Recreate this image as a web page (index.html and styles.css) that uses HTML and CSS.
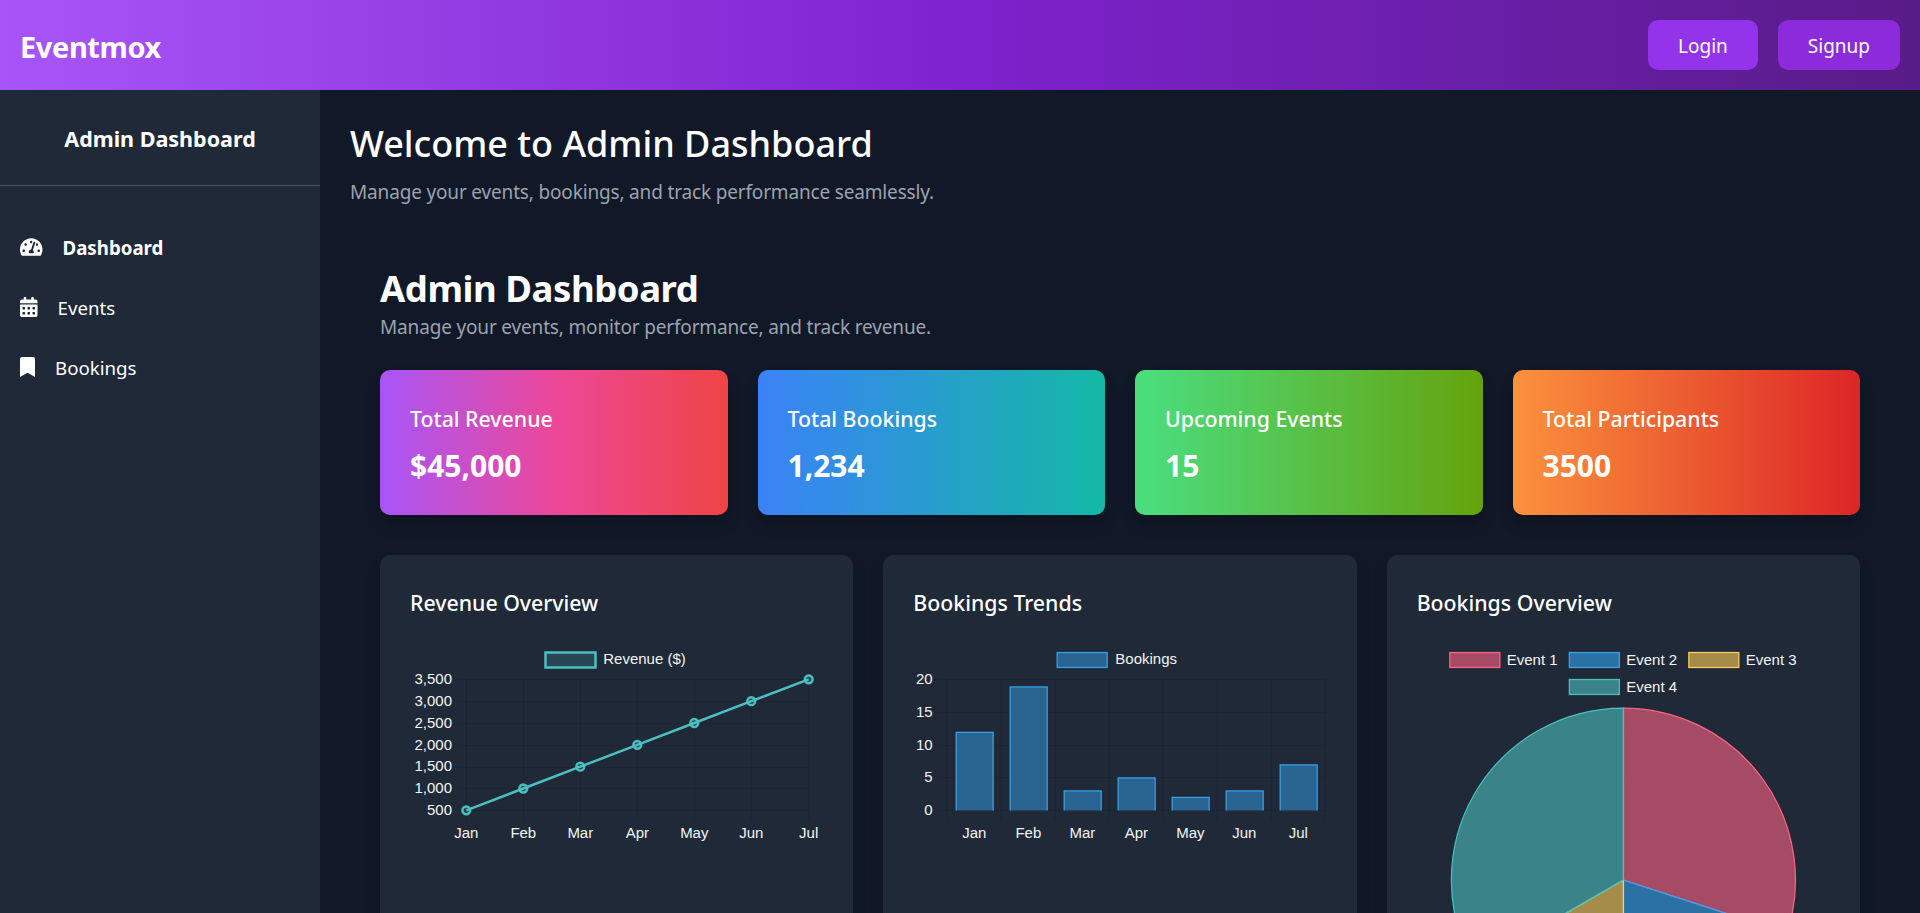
FILE: index.html
```html
<!DOCTYPE html>
<html lang="en">
<head>
    <meta charset="UTF-8">
    <meta name="viewport" content="width=device-width, initial-scale=1.0">
    <title>Eventmox Admin Dashboard</title>
    <link rel="stylesheet" href="styles.css">
</head>
<body>
    <!-- Top bar -->
    <header class="topbar">
        <div class="logo">Eventmox</div>
        <div class="auth">
            <button class="btn btn-login">Login</button>
            <button class="btn btn-signup">Signup</button>
        </div>
    </header>

    <div class="layout">
        <!-- Sidebar -->
        <aside class="sidebar">
            <div class="sidebar-title">Admin Dashboard</div>
            <nav class="nav">
                <a class="nav-item active">
                    <svg class="icon icon-gauge" viewBox="0 0 576 512"><path d="M288 32C128.94 32 0 160.94 0 320c0 52.8 14.25 102.26 39.06 144.8 5.61 9.62 16.3 15.2 27.44 15.2h443c11.14 0 21.83-5.58 27.44-15.2C561.75 422.26 576 372.8 576 320c0-159.06-128.94-288-288-288zm0 64c14.71 0 26.58 10.13 30.32 23.65-1.11 2.26-2.64 4.23-3.45 6.67l-9.22 27.67c-5.13 3.49-10.97 6.01-17.64 6.01-17.67 0-32-14.33-32-32S270.33 96 288 96zM96 384c-17.67 0-32-14.33-32-32s14.33-32 32-32 32 14.33 32 32-14.33 32-32 32zm48-160c-17.67 0-32-14.33-32-32s14.33-32 32-32 32 14.33 32 32-14.33 32-32 32zm246.77-72.41l-61.33 184C343.13 347.33 352 364.54 352 384c0 11.72-3.38 22.55-8.88 32H232.88c-5.5-9.45-8.88-20.28-8.88-32 0-33.94 26.5-61.43 59.9-63.59l61.34-184.01c4.17-12.56 17.73-19.45 30.36-15.17 12.57 4.19 19.35 17.79 15.17 30.36zm14.66 57.2l15.52-46.55c3.47-1.29 7.13-2.23 11.05-2.23 17.67 0 32 14.33 32 32s-14.33 32-32 32c-11.38-.01-20.89-6.28-26.57-15.22zM480 384c-17.67 0-32-14.33-32-32s14.33-32 32-32 32 14.33 32 32-14.33 32-32 32z"/></svg>
                    <span>Dashboard</span>
                </a>
                <a class="nav-item">
                    <svg class="icon icon-calendar" viewBox="0 0 448 512"><path d="M0 464c0 26.5 21.5 48 48 48h352c26.5 0 48-21.5 48-48V192H0v272zm320-196c0-6.6 5.4-12 12-12h40c6.6 0 12 5.4 12 12v40c0 6.6-5.4 12-12 12h-40c-6.6 0-12-5.4-12-12v-40zm0 128c0-6.6 5.4-12 12-12h40c6.6 0 12 5.4 12 12v40c0 6.6-5.4 12-12 12h-40c-6.6 0-12-5.4-12-12v-40zM192 268c0-6.6 5.4-12 12-12h40c6.6 0 12 5.4 12 12v40c0 6.6-5.4 12-12 12h-40c-6.6 0-12-5.4-12-12v-40zm0 128c0-6.6 5.4-12 12-12h40c6.6 0 12 5.4 12 12v40c0 6.6-5.4 12-12 12h-40c-6.6 0-12-5.4-12-12v-40zM64 268c0-6.6 5.4-12 12-12h40c6.6 0 12 5.4 12 12v40c0 6.6-5.4 12-12 12H76c-6.6 0-12-5.4-12-12v-40zm0 128c0-6.6 5.4-12 12-12h40c6.6 0 12 5.4 12 12v40c0 6.6-5.4 12-12 12H76c-6.6 0-12-5.4-12-12v-40zM400 64h-48V16c0-8.8-7.2-16-16-16h-32c-8.8 0-16 7.2-16 16v48H160V16c0-8.8-7.2-16-16-16h-32c-8.8 0-16 7.2-16 16v48H48C21.5 64 0 85.5 0 112v48h448v-48c0-26.5-21.5-48-48-48z"/></svg>
                    <span>Events</span>
                </a>
                <a class="nav-item">
                    <svg class="icon icon-bookmark" viewBox="0 0 384 512"><path d="M0 512V48C0 21.49 21.49 0 48 0h288c26.51 0 48 21.49 48 48v464L192 400 0 512z"/></svg>
                    <span>Bookings</span>
                </a>
            </nav>
        </aside>

        <!-- Main content -->
        <main class="main">
            <h1 class="welcome">Welcome to Admin Dashboard</h1>
            <p class="welcome-sub">Manage your events, bookings, and track performance seamlessly.</p>

            <section class="dashboard">
                <h2 class="dash-title">Admin Dashboard</h2>
                <p class="dash-sub">Manage your events, monitor performance, and track revenue.</p>

                <!-- Stat cards -->
                <div class="stats">
                    <div class="stat stat-revenue">
                        <div class="stat-label">Total Revenue</div>
                        <div class="stat-value">$45,000</div>
                    </div>
                    <div class="stat stat-bookings">
                        <div class="stat-label">Total Bookings</div>
                        <div class="stat-value">1,234</div>
                    </div>
                    <div class="stat stat-events">
                        <div class="stat-label">Upcoming Events</div>
                        <div class="stat-value">15</div>
                    </div>
                    <div class="stat stat-people">
                        <div class="stat-label">Total Participants</div>
                        <div class="stat-value">3500</div>
                    </div>
                </div>

                <!-- Charts -->
                <div class="charts">
                    <div class="chart-card">
                        <h3 class="chart-title">Revenue Overview</h3>
                        <svg class="chart" viewBox="410 640 413.33 430">
                            <rect class="teal" x="545.5" y="652.5" width="50" height="15"/>
                            <text class="legend" x="603.3" y="664.5">Revenue ($)</text>
                            <path class="grid" d="M466.5 679.5V820M523.5 679.5V820M580.5 679.5V820M637.5 679.5V820M694.5 679.5V820M751.5 679.5V820M808.5 679.5V820M458 679.5H808.5M458 701.5H808.5M458 723.5H808.5M458 745.5H808.5M458 767.5H808.5M458 788.5H808.5M458 810.5H808.5"/>
                            <text class="tick end" x="452" y="684.5">3,500</text>
                            <text class="tick end" x="452" y="706.5">3,000</text>
                            <text class="tick end" x="452" y="728.5">2,500</text>
                            <text class="tick end" x="452" y="750">2,000</text>
                            <text class="tick end" x="452" y="771.5">1,500</text>
                            <text class="tick end" x="452" y="793.5">1,000</text>
                            <text class="tick end" x="452" y="815">500</text>
                            <polyline class="line" points="466.3,810.3 523.3,788.5 580.3,766.7 637.3,744.8 694.3,723 751.3,701.2 808.7,679.3"/>
                            <g class="dots">
                                <circle cx="466.3" cy="810.3" r="3.9"/><circle cx="523.3" cy="788.5" r="3.9"/><circle cx="580.3" cy="766.7" r="3.9"/><circle cx="637.3" cy="744.8" r="3.9"/><circle cx="694.3" cy="723" r="3.9"/><circle cx="751.3" cy="701.2" r="3.9"/><circle cx="808.7" cy="679.3" r="3.9"/>
                            </g>
                            <text class="tick mid" x="466.3" y="838.5">Jan</text>
                            <text class="tick mid" x="523.3" y="838.5">Feb</text>
                            <text class="tick mid" x="580.3" y="838.5">Mar</text>
                            <text class="tick mid" x="637.3" y="838.5">Apr</text>
                            <text class="tick mid" x="694.3" y="838.5">May</text>
                            <text class="tick mid" x="751.3" y="838.5">Jun</text>
                            <text class="tick mid" x="808.7" y="838.5">Jul</text>
                        </svg>
                    </div>

                    <div class="chart-card">
                        <h3 class="chart-title">Bookings Trends</h3>
                        <svg class="chart" viewBox="913.33 640 413.33 430">
                            <rect class="bar" x="1057.5" y="652.5" width="50" height="15"/>
                            <text class="legend" x="1115.7" y="664.5">Bookings</text>
                            <path class="grid" d="M947.5 679.5V820M1001.5 679.5V820M1055.5 679.5V820M1109.5 679.5V820M1163.5 679.5V820M1217.5 679.5V820M1271.5 679.5V820M1325.5 679.5V820M939 679.5H1325.5M939 712.5H1325.5M939 745.5H1325.5M939 777.5H1325.5M939 810.5H1325.5"/>
                            <text class="tick end" x="933" y="684.5">20</text>
                            <text class="tick end" x="933" y="717">15</text>
                            <text class="tick end" x="933" y="750">10</text>
                            <text class="tick end" x="933" y="782.5">5</text>
                            <text class="tick end" x="933" y="815">0</text>
                            <path class="bar" d="M956.5 810.5V732.5H993.5V810.5"/>
                            <path class="bar" d="M1010.5 810.5V687H1047.5V810.5"/>
                            <path class="bar" d="M1064.5 810.5V791H1101.5V810.5"/>
                            <path class="bar" d="M1118.5 810.5V778H1155.5V810.5"/>
                            <path class="bar" d="M1172.5 810.5V797.5H1209.5V810.5"/>
                            <path class="bar" d="M1226.5 810.5V791H1263.5V810.5"/>
                            <path class="bar" d="M1280.5 810.5V765H1317.5V810.5"/>
                            <text class="tick mid" x="974.7" y="838.5">Jan</text>
                            <text class="tick mid" x="1028.7" y="838.5">Feb</text>
                            <text class="tick mid" x="1082.7" y="838.5">Mar</text>
                            <text class="tick mid" x="1136.7" y="838.5">Apr</text>
                            <text class="tick mid" x="1190.7" y="838.5">May</text>
                            <text class="tick mid" x="1244.7" y="838.5">Jun</text>
                            <text class="tick mid" x="1298.7" y="838.5">Jul</text>
                        </svg>
                    </div>

                    <div class="chart-card">
                        <h3 class="chart-title">Bookings Overview</h3>
                        <svg class="chart" viewBox="1416.67 640 413.33 430">
                            <rect class="slice pink" x="1449.5" y="652.5" width="50" height="15"/>
                            <text class="legend" x="1506.4" y="664.5">Event 1</text>
                            <rect class="slice blue" x="1569" y="652.5" width="50" height="15"/>
                            <text class="legend" x="1625.9" y="664.5">Event 2</text>
                            <rect class="slice gold" x="1688.5" y="652.5" width="50" height="15"/>
                            <text class="legend" x="1745.4" y="664.5">Event 3</text>
                            <rect class="slice aqua" x="1569" y="679.5" width="50" height="15"/>
                            <text class="legend" x="1625.9" y="692">Event 4</text>
                            <path class="slice pink" d="M1623.1 880V708A172 172 0 0 1 1786.7 933.2Z"/>
                            <path class="slice blue" d="M1623.1 880L1786.7 933.2A172 172 0 0 1 1623.1 1052Z"/>
                            <path class="slice gold" d="M1623.1 880V1052A172 172 0 0 1 1474.1 966Z"/>
                            <path class="slice aqua" d="M1623.1 880L1474.1 966A172 172 0 0 1 1623.1 708Z"/>
                        </svg>
                    </div>
                </div>
            </section>
        </main>
    </div>
</body>
</html>
```

FILE: styles.css
```css
/* Page base */
html, body {
    height: 100%;
}

body {
    margin: 0;
    height: 100vh;
    overflow: hidden;
    display: flex;
    flex-direction: column;
    background-color: #111827;
    color: #fff;
    font-family: "Noto Sans", "Open Sans", sans-serif;
    font-size: 19px;
}

h1, h2, h3, p {
    margin: 0;
}

/* Top bar */
.topbar {
    flex: none;
    height: 90px;
    box-sizing: border-box;
    padding: 20px;
    display: flex;
    align-items: center;
    justify-content: space-between;
    background: linear-gradient(to right, #a855f7, #7e22ce, #581c87);
}

.logo {
    padding-top: 2px;
    font-size: 29px;
    font-weight: 700;
    letter-spacing: -0.4px;
}

.auth {
    display: flex;
    gap: 20px;
}

.btn {
    height: 50px;
    padding: 2px 30px 0;
    border: none;
    border-radius: 10px;
    color: #fff;
    font-family: inherit;
    font-size: 19px;
}

.btn-login {
    background-color: #9333ea;
}

.btn-signup {
    background-color: #8b2bdb;
}

/* Layout */
.layout {
    flex: 1;
    min-height: 0;
    display: flex;
}

.sidebar {
    flex: none;
    width: 320px;
    background-color: #1f2937;
}

.sidebar-title {
    height: 96px;
    box-sizing: border-box;
    padding: 32px 30px 30px;
    border-bottom: 1px solid #4b5563;
    text-align: center;
    font-size: 21.5px;
    font-weight: 700;
    line-height: 34px;
}

.nav {
    padding-top: 31px;
}

.nav-item {
    height: 60px;
    padding-left: 20px;
    display: flex;
    align-items: center;
    gap: 20px;
    font-size: 18.7px;
}

.nav-item.active {
    font-weight: 700;
}

.icon {
    flex: none;
    height: 20px;
    fill: #fff;
}

.icon-gauge {
    width: 22.5px;
}

.icon-calendar {
    width: 17.5px;
}

.icon-bookmark {
    width: 15px;
}

/* Main area */
.main {
    flex: 1;
    min-width: 0;
    padding: 31px 30px 30px;
}

.welcome {
    font-size: 36px;
    font-weight: 500;
    line-height: 45px;
}

.welcome-sub {
    margin-top: 11px;
    color: #9ca3af;
    line-height: 30px;
    letter-spacing: -0.165px;
}

.dashboard {
    margin-top: 29px;
    padding: 28px 30px 30px;
}

.dash-title {
    font-size: 36.5px;
    font-weight: 700;
    line-height: 48px;
    letter-spacing: -0.45px;
}

.dash-sub {
    color: #9ca3af;
    line-height: 30px;
    letter-spacing: -0.165px;
}

/* Stat cards */
.stats {
    margin-top: 28px;
    display: grid;
    grid-template-columns: repeat(4, 1fr);
    gap: 30px;
}

.stat {
    height: 145px;
    box-sizing: border-box;
    padding: 31px 30px 0;
    border-radius: 10px;
    box-shadow: 0 10px 15px rgba(0, 0, 0, 0.15);
}

.stat-revenue {
    background: linear-gradient(to right, #a855f7, #ec4899, #ef4444);
}

.stat-bookings {
    background: linear-gradient(to right, #3b82f6, #14b8a6);
}

.stat-events {
    background: linear-gradient(to right, #4ade80, #65a30d);
}

.stat-people {
    background: linear-gradient(to right, #fb923c, #dc2626);
}

.stat-label {
    font-size: 21.3px;
    font-weight: 500;
    line-height: 35px;
}

.stat-value {
    margin-top: 10px;
    font-size: 30px;
    font-weight: 700;
    line-height: 40px;
}

/* Chart cards */
.charts {
    margin-top: 40px;
    display: grid;
    grid-template-columns: repeat(3, 1fr);
    gap: 30px;
}

.chart-card {
    padding: 30px;
    border-radius: 10px;
    background-color: #1f2937;
    box-shadow: 0 10px 15px rgba(0, 0, 0, 0.15);
}

.chart-title {
    margin-bottom: 20px;
    font-size: 21.3px;
    font-weight: 500;
    line-height: 35px;
}

.chart {
    display: block;
    width: 100%;
}

/* Chart parts */
.grid {
    fill: none;
    stroke: rgba(0, 0, 0, 0.1);
    stroke-width: 1;
}

.tick, .legend {
    fill: #f3f4f6;
    font-family: "Liberation Sans", Arial, sans-serif;
    font-size: 15px;
}

.end {
    text-anchor: end;
}

.mid {
    text-anchor: middle;
}

.teal {
    fill: rgba(75, 192, 192, 0.2);
    stroke: #4bc0c0;
    stroke-width: 2.5;
}

.line {
    fill: none;
    stroke: #4bc0c0;
    stroke-width: 2.5;
}

.dots circle {
    fill: rgba(75, 192, 192, 0.2);
    stroke: #4bc0c0;
    stroke-width: 2.5;
}

.bar {
    fill: rgba(54, 162, 235, 0.5);
    stroke: #36a2eb;
    stroke-width: 1.25;
}

.slice {
    stroke-width: 1.25;
}

.pink {
    fill: rgba(255, 99, 132, 0.6);
    stroke: #ff6384;
}

.blue {
    fill: rgba(54, 162, 235, 0.6);
    stroke: #36a2eb;
}

.gold {
    fill: rgba(255, 206, 86, 0.6);
    stroke: #ffce56;
}

.aqua {
    fill: rgba(75, 192, 192, 0.6);
    stroke: #4bc0c0;
}
```
